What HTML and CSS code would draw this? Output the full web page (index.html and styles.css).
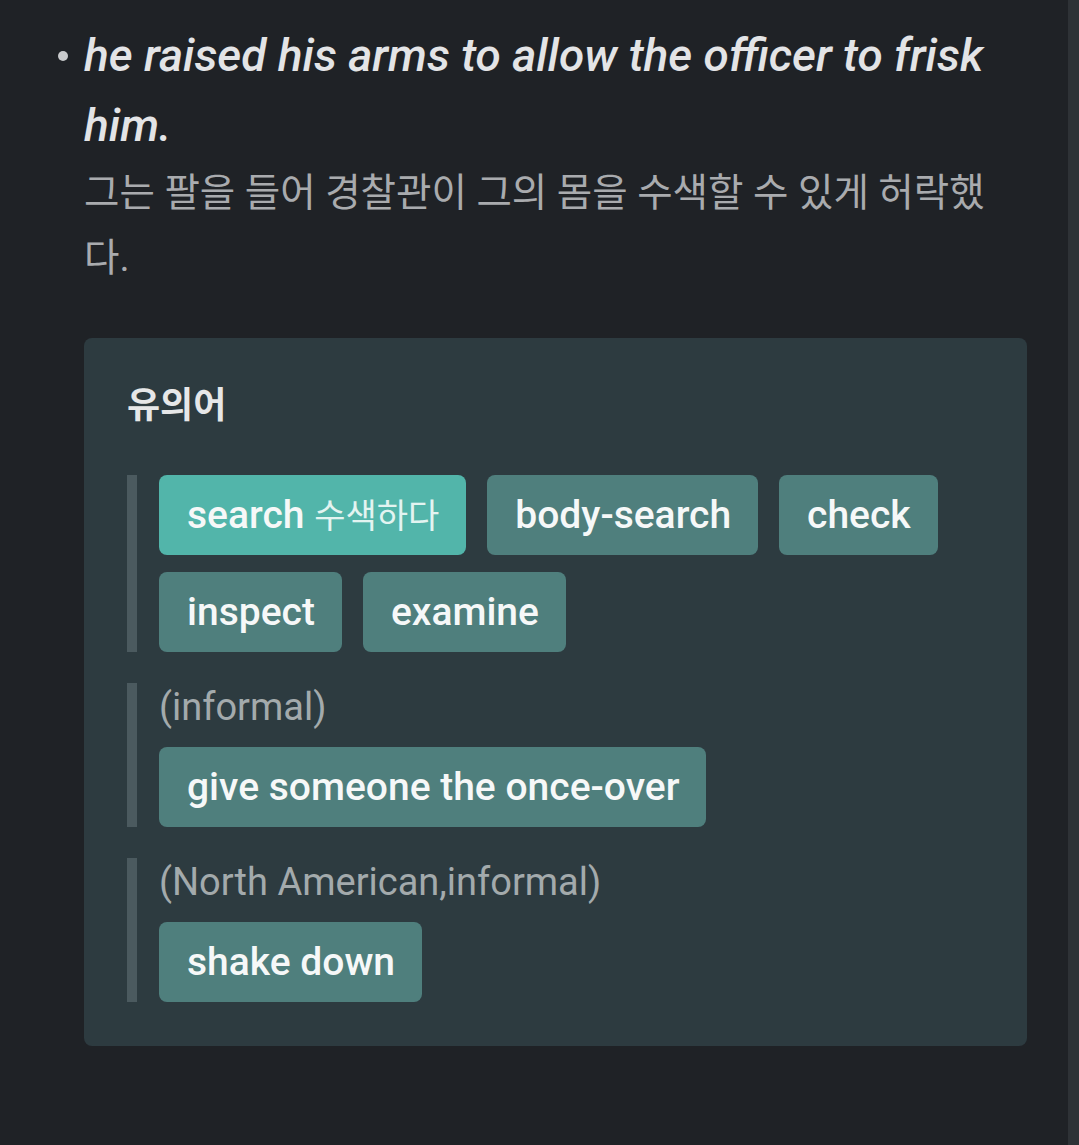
FILE: index.html
```html
<!DOCTYPE html>
<html lang="ko">
<head>
  <meta charset="UTF-8">
  <meta name="viewport" content="width=device-width, initial-scale=1.0">
  <title>frisk - 유의어</title>
  <link rel="stylesheet" href="styles.css">
</head>
<body>

  <div class="page">
    <div class="content">

      <div class="example">
        <span class="bullet"></span>
        <div class="example-body">
          <p class="example-en">he raised his arms to allow the officer to frisk him.</p>
          <p class="example-ko">그는 팔을 들어 경찰관이 그의 몸을 수색할 수 있게 허락했다.</p>
        </div>
      </div>

      <div class="synonym-card">
        <h3>유의어</h3>

        <div class="syn-group">
          <div class="chips">
            <span class="chip active">search <span class="chip-ko">수색하다</span></span>
            <span class="chip">body-search</span>
            <span class="chip">check</span>
            <span class="chip">inspect</span>
            <span class="chip">examine</span>
          </div>
        </div>

        <div class="syn-group">
          <p class="syn-label">(informal)</p>
          <div class="chips">
            <span class="chip">give someone the once-over</span>
          </div>
        </div>

        <div class="syn-group">
          <p class="syn-label">(North American,informal)</p>
          <div class="chips">
            <span class="chip">shake down</span>
          </div>
        </div>
      </div>

    </div>
    <div class="scroll-track"></div>
  </div>

</body>
</html>
```

FILE: styles.css
```css
body {
  margin: 0;
  padding: 0;
  background-color: #1f2226;
  font-family: Roboto, "Noto Sans CJK KR", sans-serif;
}

.page {
  display: flex;
  min-height: 1145px;
}

.content {
  flex: 1;
  padding: 20px 41px 0 84px;
}

.scroll-track {
  width: 11px;
  background-color: #2e3236;
}

/* example sentence */
.example {
  display: flex;
  margin-left: -27px;
}

.bullet {
  flex: 0 0 27px;
  position: relative;
}

.bullet::after {
  content: "";
  position: absolute;
  left: 1px;
  top: 31px;
  width: 10px;
  height: 10px;
  border-radius: 50%;
  background-color: #c9cbcd;
}

.example-body {
  flex: 1;
}

.example-en {
  margin: 0;
  font-size: 46px;
  line-height: 70px;
  font-style: italic;
  font-weight: 500;
  color: #e3e4e6;
}

.example-ko {
  margin: 0;
  font-size: 38.5px;
  line-height: 65px;
  color: #a9abae;
}

/* synonym card */
.synonym-card {
  margin-top: 48px;
  padding: 44px 43px 44px 43px;
  background-color: #2d3b40;
  border-radius: 8px;
}

.synonym-card h3 {
  margin: 0 0 45px;
  font-size: 36px;
  line-height: 48px;
  font-weight: 700;
  color: #e6e7e8;
}

.syn-group {
  border-left: 10px solid #4b5a5f;
  padding-left: 22px;
  margin-bottom: 31px;
}

.syn-group:last-child {
  margin-bottom: 0;
}

.syn-label {
  margin: 0 0 16px;
  font-size: 38px;
  line-height: 48px;
  color: #a3aaac;
}

.chips {
  display: flex;
  flex-wrap: wrap;
  gap: 17px 21px;
}

.chip {
  display: inline-block;
  height: 80px;
  line-height: 80px;
  padding: 0 27px 0 28px;
  font-size: 39px;
  font-weight: 500;
  color: #f6f8f8;
  background-color: #4f7f7d;
  border-radius: 8px;
  white-space: nowrap;
}

.chip.active {
  background-color: #52b5aa;
}

.chip-ko {
  font-size: 34px;
  font-weight: 400;
  color: #e3f4f1;
}
```
